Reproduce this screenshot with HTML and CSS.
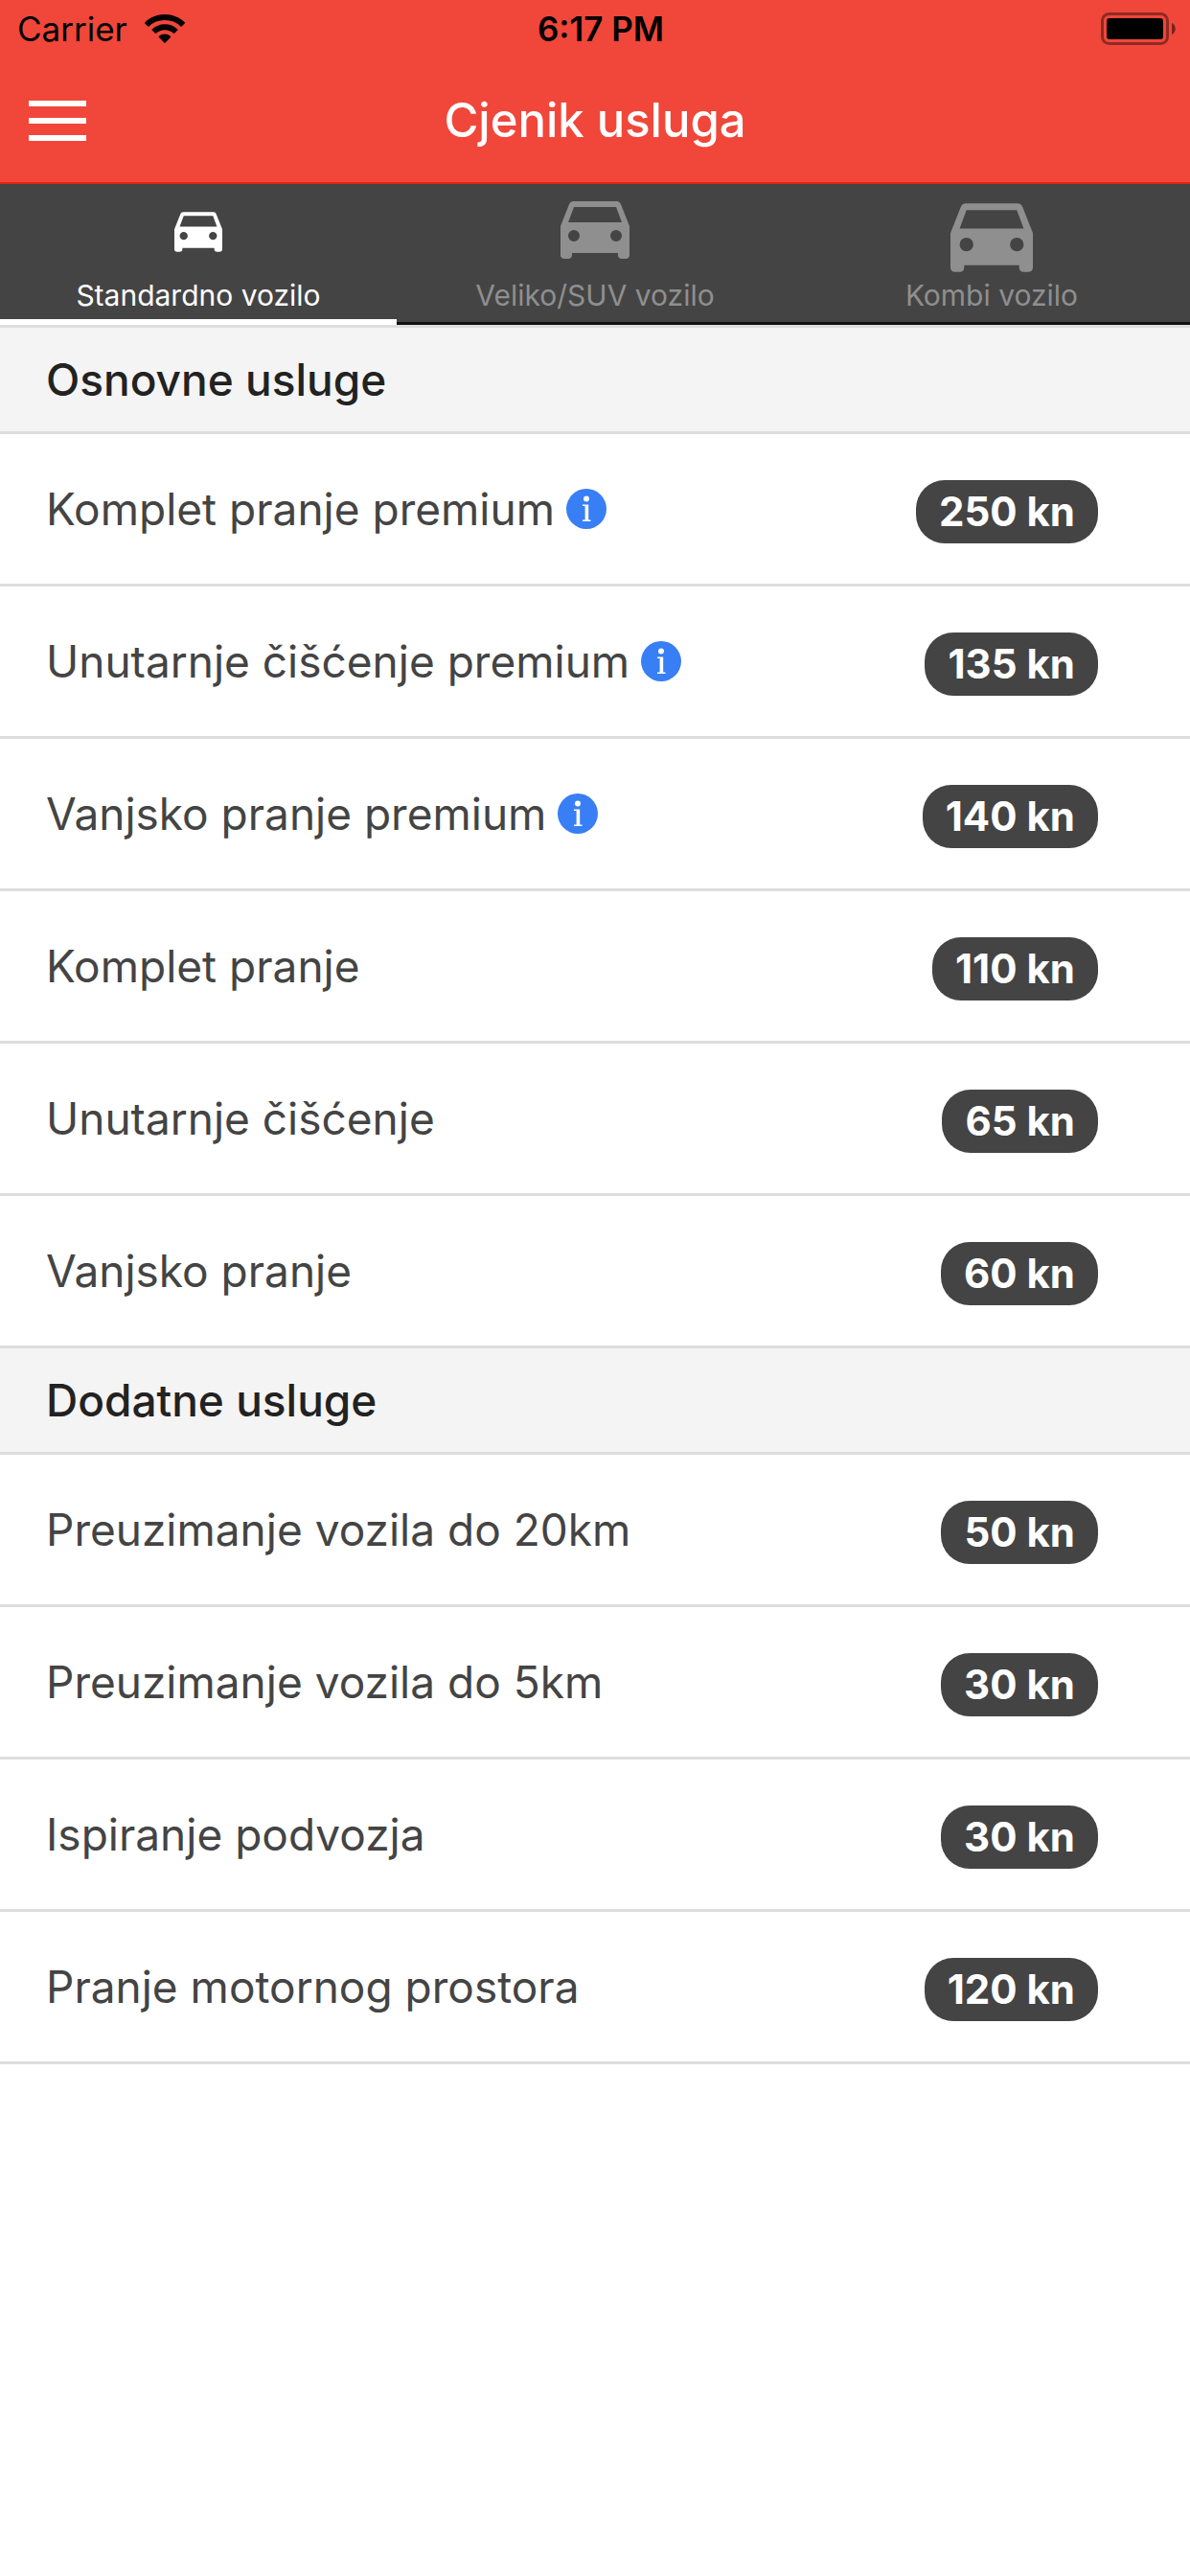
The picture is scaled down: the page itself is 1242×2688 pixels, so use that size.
FILE: index.html
```html
<!DOCTYPE html>
<html lang="hr">
<head>
    <meta charset="UTF-8">
    <meta name="viewport" content="width=device-width, initial-scale=1.0">
    <title>Cjenik usluga</title>
    <link rel="stylesheet" href="styles.css">
</head>
<body>
    <!-- Shared icons -->
    <svg class="icon-defs" aria-hidden="true">
        <symbol id="icon-car" viewBox="0 0 72 60">
            <path fill-rule="evenodd" d="M13.5 0h45c2.2 0 3.8 1.3 4.5 3.2L72 26v30c0 2.500-1.500 4-4 4h-4c-2.500 0-4-1.500-4-4v-2H12v2c0 2.500-1.500 4-4 4H4c-2.500 0-4-1.500-4-4V26L9 3.200C9.700 1.300 11.300 0 13.500 0zM14 6L8 22h56L58 6zM14 30a6 6 0 1 0 0 12 6 6 0 0 0 0-12zM58 30a6 6 0 1 0 0 12 6 6 0 0 0 0-12z"/>
        </symbol>
        <symbol id="icon-info" viewBox="0 0 42 42">
            <circle cx="21" cy="21" r="21" fill="#387ef5"/>
            <circle cx="21" cy="10.500" r="3" fill="#fff"/>
            <path d="M17 16.500h6.200v16H25.500V34h-8.500v-1.500h2.600V18H17z" fill="#fff"/>
        </symbol>
    </svg>

    <header class="header">
        <div class="status-bar">
            <div class="status-left">
                <span>Carrier</span>
                <svg class="wifi" viewBox="0 0 42 30" aria-hidden="true">
                    <path d="M21 0C13 0 5.800 3 .3 8.200a.8.8 0 0 0 0 1.200l2.900 3c.4.4.9.4 1.300 0A24 24 0 0 1 21 6a24 24 0 0 1 16.500 6.400c.4.4.9.4 1.300 0l2.900-3a.8.8 0 0 0 0-1.200C36.200 3 29 0 21 0z"/>
                    <path d="M21 10.200c-5.100 0-9.800 2-13.300 5.200a.8.8 0 0 0 0 1.200l3 3c.4.4.8.4 1.200.1A13.500 13.500 0 0 1 21 16.200c3.500 0 6.700 1.300 9.100 3.500.4.3.8.3 1.200-.1l3-3a.8.8 0 0 0 0-1.200A19.500 19.500 0 0 0 21 10.200z"/>
                    <path d="M21 20.500c-2.300 0-4.400.8-6 2.200a.8.8 0 0 0 0 1.200l5.400 5.700c.4.4.8.4 1.200 0l5.400-5.700a.8.8 0 0 0 0-1.200 9.300 9.300 0 0 0-6-2.200z"/>
                </svg>
            </div>
            <div class="status-time">6:17 PM</div>
            <div class="status-right">
                <svg class="battery" viewBox="0 0 79 34" aria-hidden="true">
                    <rect x="1.500" y="1.500" width="68" height="31" rx="7" fill="none" stroke="#000" stroke-opacity="0.4" stroke-width="3"/>
                    <rect x="6" y="6" width="59" height="22" rx="3"/>
                    <path d="M74 11c5 2 5 10 0 12z" fill-opacity="0.5"/>
                </svg>
            </div>
        </div>
        <div class="nav-bar">
            <button class="menu-button" type="button" aria-label="Izbornik">
                <span></span>
                <span></span>
                <span></span>
            </button>
            <h1 class="nav-title">Cjenik usluga</h1>
        </div>
    </header>

    <nav class="tabs">
        <button class="tab active" type="button">
            <svg class="car car-small" aria-hidden="true"><use href="#icon-car"/></svg>
            <span>Standardno vozilo</span>
        </button>
        <button class="tab" type="button">
            <svg class="car car-medium" aria-hidden="true"><use href="#icon-car"/></svg>
            <span>Veliko/SUV vozilo</span>
        </button>
        <button class="tab" type="button">
            <svg class="car car-large" aria-hidden="true"><use href="#icon-car"/></svg>
            <span>Kombi vozilo</span>
        </button>
    </nav>

    <main>
        <section>
            <h2 class="list-header">Osnovne usluge</h2>
            <ul class="list">
                <li class="item">
                    <span>Komplet pranje premium</span>
                    <button class="info-button" type="button" aria-label="Informacije"><svg><use href="#icon-info"/></svg></button>
                    <span class="price">250 kn</span>
                </li>
                <li class="item">
                    <span>Unutarnje čišćenje premium</span>
                    <button class="info-button" type="button" aria-label="Informacije"><svg><use href="#icon-info"/></svg></button>
                    <span class="price">135 kn</span>
                </li>
                <li class="item">
                    <span>Vanjsko pranje premium</span>
                    <button class="info-button" type="button" aria-label="Informacije"><svg><use href="#icon-info"/></svg></button>
                    <span class="price">140 kn</span>
                </li>
                <li class="item">
                    <span>Komplet pranje</span>
                    <span class="price">110 kn</span>
                </li>
                <li class="item">
                    <span>Unutarnje čišćenje</span>
                    <span class="price">65 kn</span>
                </li>
                <li class="item">
                    <span>Vanjsko pranje</span>
                    <span class="price">60 kn</span>
                </li>
            </ul>
        </section>
        <section>
            <h2 class="list-header">Dodatne usluge</h2>
            <ul class="list">
                <li class="item">
                    <span>Preuzimanje vozila do 20km</span>
                    <span class="price">50 kn</span>
                </li>
                <li class="item">
                    <span>Preuzimanje vozila do 5km</span>
                    <span class="price">30 kn</span>
                </li>
                <li class="item">
                    <span>Ispiranje podvozja</span>
                    <span class="price">30 kn</span>
                </li>
                <li class="item">
                    <span>Pranje motornog prostora</span>
                    <span class="price">120 kn</span>
                </li>
            </ul>
        </section>
    </main>
</body>
</html>
```

FILE: styles.css
```css
* {
    box-sizing: border-box;
}
body {
    margin: 0;
    background-color: #ffffff;
    color: #444444;
    font-family: Inter, Roboto, sans-serif;
}
button {
    margin: 0;
    padding: 0;
    border: none;
    background: none;
    font-family: inherit;
    cursor: pointer;
}
svg {
    display: block;
}
.icon-defs {
    display: none;
}

/* Header */
.header {
    background-color: #f0473a;
    border-bottom: 2px solid #e02416;
}
.status-bar {
    display: grid;
    grid-template-columns: 1fr auto 1fr;
    align-items: center;
    height: 60px;
    padding: 0 6px 0 18px;
    color: #000000;
    font-size: 35px;
    line-height: 42px;
}
.status-left {
    display: flex;
    align-items: center;
    gap: 18px;
}
.wifi {
    width: 42px;
    height: 30px;
}
.status-time {
    font-weight: 600;
}
.status-right {
    display: flex;
    justify-content: flex-end;
    padding-right: 8px;
}
.battery {
    width: 79px;
    height: 34px;
}
.nav-bar {
    display: grid;
    grid-template-columns: 1fr auto 1fr;
    align-items: center;
    height: 130px;
    padding: 2px 30px 0;
}
.menu-button {
    display: flex;
    flex-direction: column;
    gap: 12px;
    width: 60px;
}
.menu-button span {
    height: 6px;
    background-color: #ffffff;
}
.nav-title {
    margin: 0;
    color: #ffffff;
    font-size: 49px;
    font-weight: 500;
    line-height: 60px;
}

/* Tabs */
.tabs {
    display: flex;
    background-color: #444444;
}
.tab {
    display: flex;
    flex: 1;
    flex-direction: column;
    align-items: center;
    justify-content: space-between;
    height: 147px;
    padding-bottom: 10px;
    border-bottom: 3px solid #111111;
    color: #8f8f8f;
    font-size: 30px;
    line-height: 36px;
}
.tab.active {
    padding-bottom: 7px;
    border-bottom: 6px solid #ffffff;
    color: #ffffff;
}
.car {
    fill: currentColor;
}
.car-small {
    width: 50px;
    height: 42px;
    margin-top: 29px;
}
.car-medium {
    width: 72px;
    height: 60px;
    margin-top: 18px;
}
.car-large {
    width: 86px;
    height: 72px;
    margin-top: 20px;
}

/* Price list */
.list-header {
    margin: 0;
    padding: 24px 48px;
    border-top: 3px solid #dddddd;
    border-bottom: 3px solid #dddddd;
    background-color: #f4f4f4;
    color: #222222;
    font-size: 46px;
    font-weight: 500;
    line-height: 60px;
}
.list {
    margin: 0;
    padding: 0;
    list-style: none;
}
.item {
    display: flex;
    align-items: center;
    height: 159px;
    padding: 0 96px 0 48px;
    border-bottom: 3px solid #dddddd;
    font-size: 46px;
    line-height: 60px;
}
/* the next header already draws this line */
section:not(:last-child) .item:last-child {
    height: 156px;
    border-bottom: none;
}
.info-button {
    margin-left: 12px;
}
.info-button svg {
    width: 42px;
    height: 42px;
}
.price {
    margin-top: 6px;
    margin-left: auto;
    padding: 0 24px;
    border-radius: 30px;
    background-color: #444444;
    color: #ffffff;
    font-size: 42px;
    font-weight: 700;
    line-height: 66px;
}
```
